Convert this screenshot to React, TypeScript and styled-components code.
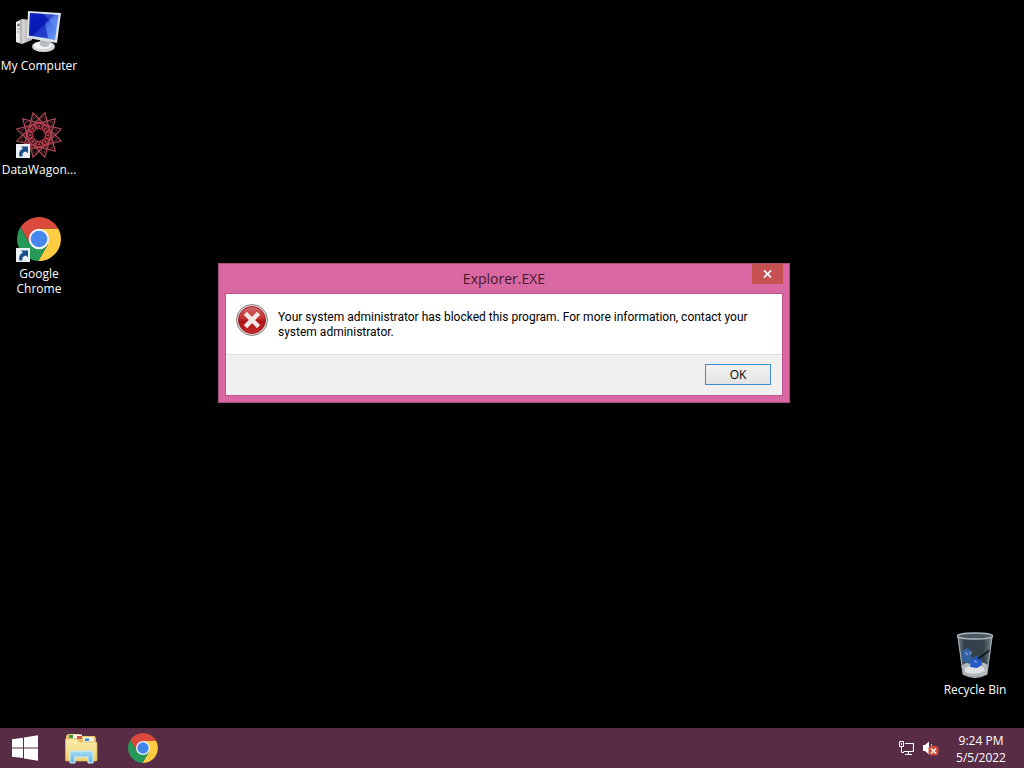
import React from 'react';
import styled, { createGlobalStyle } from 'styled-components';

const GlobalStyle = createGlobalStyle`
  * { box-sizing: border-box; }
  body {
    margin: 0;
    background: #000;
    font-family: "Open Sans", "Noto Sans", sans-serif;
    font-size: 12px;
    line-height: 15px;
  }
  button { font: inherit; }
`;

const Screen = styled.div`
  display: flex;
  flex-direction: column;
  min-height: 100vh;
`;

const Desktop = styled.main`
  position: relative;
  flex: 1;
  background: #000;
`;

const IconColumn = styled.div`
  display: flex;
  flex-direction: column;
  align-items: flex-start;
`;

const Shortcut = styled.button`
  display: flex;
  flex-direction: column;
  align-items: center;
  gap: 2px;
  width: 78px;
  height: 104px;
  padding: 8px 0 0;
  border: 0;
  background: none;
  color: #fff;
  white-space: nowrap;
`;

const BinSlot = styled.div`
  position: absolute;
  right: 10px;
  bottom: 0;
`;

const Dialog = styled.section`
  position: absolute;
  left: 218px;
  top: 263px;
  width: 572px;
  padding: 0 7px 7px;
  border: 1px solid #a9507f;
  background: #d968a2;
`;

const TitleBar = styled.header`
  position: relative;
  display: flex;
  justify-content: center;
  align-items: center;
  height: 30px;
`;

const Title = styled.h1`
  margin: 0;
  color: #43182f;
  font-size: 14px;
  line-height: 20px;
  font-weight: 400;
`;

const CloseButton = styled.button`
  position: absolute;
  right: -1px;
  top: 0;
  display: grid;
  place-items: center;
  width: 31px;
  height: 20px;
  padding: 0;
  border: 0;
  background: #c75050;
`;

const DialogPanel = styled.div`
  background: #fff;
  outline: 1px solid #bf5590;
`;

const Message = styled.div`
  display: flex;
  gap: 10px;
  padding: 10px 10px 14px;
`;

const MessageText = styled.p`
  flex: 1;
  margin: 6px 0 0;
  color: #000;
  font-family: Roboto, sans-serif;
`;

const Actions = styled.footer`
  display: flex;
  justify-content: flex-end;
  padding: 9px 11px 10px;
  border-top: 1px solid #dfdfdf;
  background: #f0f0f0;
`;

const OkButton = styled.button`
  width: 66px;
  height: 21px;
  padding: 0;
  border: 1px solid #3c8fd0;
  background: linear-gradient(#f1f1f1, #e4e4e4);
  color: #000;
`;

const Taskbar = styled.footer`
  display: flex;
  justify-content: space-between;
  height: 40px;
  background: #592c45;
`;

const Group = styled.div<{ $gap: number; $left?: number; $right?: number }>`
  display: flex;
  align-items: center;
  gap: ${(p) => p.$gap}px;
  padding-left: ${(p) => p.$left ?? 0}px;
  padding-right: ${(p) => p.$right ?? 0}px;
`;

const BarButton = styled.button`
  display: grid;
  place-items: center;
  padding: 0;
  border: 0;
  background: none;
`;

const Clock = styled.time`
  width: 54px;
  margin-left: 7px;
  padding-top: 2px;
  color: #fff;
  line-height: 17px;
  text-align: center;
`;

const ShortcutArrow = () => (
  <g>
    <rect x="1" y="32" width="14" height="14" fill="#e9f0f6" />
    <path d="M4.500 44.500c-1-4 .5-7 3.500-7.500L6 34.500h7v7l-2-2c-3 .5-4 2-3.500 5z" fill="#1d4f88" />
  </g>
);

const ComputerIcon = () => (
  <svg width="48" height="48" viewBox="0 0 48 48" aria-hidden="true">
    <defs>
      <linearGradient id="screen" x1="0" y1="0" x2="1" y2="1">
        <stop offset="0" stopColor="#1d36c8" />
        <stop offset="0.45" stopColor="#0a1bb8" />
        <stop offset="0.5" stopColor="#3f6ae8" />
        <stop offset="1" stopColor="#6fa0f4" />
      </linearGradient>
      <linearGradient id="tower" x1="0" y1="0" x2="1" y2="0">
        <stop offset="0" stopColor="#f2f2f2" />
        <stop offset="1" stopColor="#a9aaab" />
      </linearGradient>
    </defs>
    <g transform="translate(-1 0)">
      <path d="M2 14l6-3 10 1v20L8 36l-6-2z" fill="url(#tower)" />
      <path d="M7 12v23" stroke="#8d8f90" />
      <circle cx="4.500" cy="17" r="1.500" fill="#777" />
      <path d="M3 21h3M3 24h3" stroke="#aaa" />
      <ellipse cx="29.500" cy="38.500" rx="11.500" ry="5.500" fill="#d5d7d8" />
      <ellipse cx="29" cy="37.500" rx="9" ry="3.500" fill="#f2f3f3" />
      <path d="M26 30l10 2-1 6c-3 2-7 1-9-1z" fill="#b9bcbe" />
      <path d="M14 3l33 2-4 30-30-5z" fill="#dbe2e8" />
      <path d="M16 5l28.500 2-3.500 25-26-4.500z" fill="url(#screen)" />
      <path d="M16 5l13 1 5 24-19-2.500z" fill="#0717b4" opacity=".6" />
      <path d="M30 6l14.500 1-2 14z" fill="#8bb1fa" opacity=".3" />
    </g>
  </svg>
);

const turns = (n: number) => Array.from({ length: n }, (_, i) => (360 / n) * i);

const WagonIcon = () => (
  <svg width="48" height="48" viewBox="-24 -24 48 48" aria-hidden="true">
    <g fill="none" transform="translate(0 -1)">
      {turns(4).map((a) => (
        <path
          key={a}
          d="M0 -23L19.900 11.500L-19.900 11.500Z"
          transform={`rotate(${a + 15})`}
          stroke="#b8505c"
          strokeWidth="1.100"
        />
      ))}
      {turns(12).map((a) => (
        <path
          key={a}
          d="M-5 -12L0 -19L5 -12"
          transform={`rotate(${a + 15})`}
          stroke="#81343a"
          strokeWidth=".8"
        />
      ))}
      {turns(8).map((a) => (
        <g key={a} transform={`rotate(${a})`}>
          <circle cy="-9.500" r="3.200" stroke="#c23e50" strokeWidth="1.200" />
          <circle cy="-9" r="1.200" fill="#d04c60" />
          <path d="M-2 -5L3 -12M2 -5L-3 -12" stroke="#8c2c3a" strokeWidth=".9" />
        </g>
      ))}
    </g>
    <g transform="translate(-24 -24)">
      <ShortcutArrow />
    </g>
  </svg>
);

const ChromeIcon = ({ size, shortcut }: { size: number; shortcut?: boolean }) => (
  <svg width={size} height={size} viewBox={shortcut ? '-24 -24 48 48' : '-22 -22 44 44'} aria-hidden="true">
    <g transform={shortcut ? 'translate(0 -1)' : undefined}>
      <path d="M-18.620 -11.650A22 22 0 0 1 19.400 -10.300H0L-8.920 5.150Z" fill="#d94a3d" />
      <path d="M19.400 -10.300A22 22 0 0 1 -.780 21.950L8.920 5.150L0 -10.300Z" fill="#fdcc42" />
      <path d="M-.780 21.950A22 22 0 0 1 -18.620 -11.650L-8.920 5.150H8.920Z" fill="#249958" />
      <circle r="10.300" fill="#f4f4f4" />
      <circle r="8.300" fill="#4586ed" />
    </g>
    {shortcut && (
      <g transform="translate(-24 -24)">
        <ShortcutArrow />
      </g>
    )}
  </svg>
);

const RecycleBinIcon = () => (
  <svg width="48" height="48" viewBox="0 0 48 48" aria-hidden="true">
    <defs>
      <linearGradient id="glass" x1="0" y1="0" x2="1" y2="0">
        <stop offset="0" stopColor="#78848c" />
        <stop offset="0.2" stopColor="#34414b" />
        <stop offset="0.75" stopColor="#35424a" />
        <stop offset="1" stopColor="#808b92" />
      </linearGradient>
    </defs>
    <path d="M6.500 4h35L36.500 42Q24 49 11.500 42z" fill="url(#glass)" />
    <path d="M10.500 34Q17 28 24 31Q32 29 37 33L36 42Q24 48 12 42z" fill="#b3babd" />
    <path d="M14 36q8-5 18-1l2 4q-10 5-20 1z" fill="#dde1e2" />
    <path d="M11 19l5-3 5 3-1 5 3 4-4 4-6-2-3-4z" fill="#34609f" />
    <path d="M20 29l5-5 5 3 1 6-5 3-7-1z" fill="#2459ca" />
    <path d="M14 20l3 3M19 20l1 2M23 29l3 1" stroke="#7fa4dc" strokeWidth="1.500" />
    <path d="M39 18L27 27" stroke="#111b22" strokeWidth="2" />
    <path d="M7 5l5 36M41 5l-5 36" stroke="#a7b2b8" />
    <path d="M11.500 42Q24 49 36.500 42" fill="none" stroke="#b8c1c5" />
    <ellipse cx="24" cy="4" rx="17.500" ry="3" fill="#4a5963" stroke="#a9b5bb" strokeWidth="1.500" />
  </svg>
);

const ErrorIcon = () => (
  <svg width="32" height="32" viewBox="0 0 32 32" aria-hidden="true">
    <defs>
      <linearGradient id="red" x1="0" y1="0" x2="0" y2="1">
        <stop offset="0" stopColor="#d36b6b" />
        <stop offset="0.45" stopColor="#c32c2f" />
        <stop offset="0.55" stopColor="#ad1015" />
        <stop offset="1" stopColor="#c92c2f" />
      </linearGradient>
    </defs>
    <circle cx="16" cy="16" r="15.500" fill="#e6dfdf" stroke="#8f7d7d" />
    <circle cx="16" cy="16" r="13.500" fill="url(#red)" stroke="#952327" />
    <path d="M11 11L21 21M21 11L11 21" stroke="#f2e9e6" strokeWidth="4.500" strokeLinecap="square" />
  </svg>
);

const WindowsIcon = () => (
  <svg width="26" height="26" viewBox="0 0 26 26" fill="#fff" aria-hidden="true">
    <path d="M0 4.200L11 2.700V12.400H0zM12 2.500L26 .3V12.400H12zM0 13.500H11V23L0 21.700zM12 13.500H26V25.700L12 23.400z" />
  </svg>
);

const ExplorerIcon = () => (
  <svg width="36" height="32" viewBox="1 0 36 32" aria-hidden="true">
    <defs>
      <linearGradient id="folder" x1="0" y1="0" x2="0" y2="1">
        <stop offset="0" stopColor="#fbeeb0" />
        <stop offset="1" stopColor="#ecd06c" />
      </linearGradient>
      <linearGradient id="stand" x1="0" y1="0" x2="0" y2="1">
        <stop offset="0" stopColor="#a6dcf2" />
        <stop offset="1" stopColor="#5fb2e2" />
      </linearGradient>
    </defs>
    <path d="M2 4l2-2h11l2 2h14l1 3v5H2z" fill="#e6c366" />
    <path d="M8 2.500h10v4H8z" fill="#f8f6e8" />
    <path d="M19 5h11v5H19z" fill="#f6f1df" />
    <path d="M5 3h4v3H5z" fill="#3b9b4a" />
    <path d="M13 4h5v3h-5z" fill="#cf5647" />
    <path d="M21 6.500h4v2.500h-4z" fill="#3d8ad0" />
    <path d="M1.500 7h11l3 3h16.500q1 0 1 1v17q0 1-1 1H2.500q-1 0-1-1z" fill="url(#folder)" stroke="#d8b659" strokeWidth=".7" />
    <path d="M6 31V21q0-2 2-2h19q2 0 2 2v10h-5v-6H11v6z" fill="url(#stand)" stroke="#d9f1fa" />
  </svg>
);

const NetworkIcon = () => (
  <svg width="16" height="16" viewBox="0 0 16 16" fill="none" stroke="#fff" aria-hidden="true">
    <path d="M7 3.500H15.500V11.500H5.500M10.500 12V14M7 14.500H14" strokeWidth="1.200" />
    <path d="M1.500 1.500H5.500V6.500H1.500zM3.500 7V12.500H6" />
    <path d="M3.500 3v2" />
  </svg>
);

const MutedIcon = () => (
  <svg width="17" height="16" viewBox="0 0 17 16" aria-hidden="true">
    <path d="M1 5H3L7 1.500V14.500L3 11H1z" fill="#fff" />
    <path d="M9 4q1.500 2 1 4" stroke="#ddd" fill="none" />
    <rect x="6.500" y="6" width="10" height="9.500" rx="3" fill="#c94c3b" />
    <path d="M9 8.500l5 5M14 8.500l-5 5" stroke="#fbe9e4" strokeWidth="1.700" />
  </svg>
);

export default function App() {
  return (
    <Screen>
      <GlobalStyle />
      <Desktop>
        <IconColumn>
          <Shortcut>
            <ComputerIcon />
            <span>My Computer</span>
          </Shortcut>
          <Shortcut>
            <WagonIcon />
            <span>DataWagon...</span>
          </Shortcut>
          <Shortcut>
            <ChromeIcon size={48} shortcut />
            <span>
              Google
              <br />
              Chrome
            </span>
          </Shortcut>
        </IconColumn>
        <BinSlot>
          <Shortcut>
            <RecycleBinIcon />
            <span>Recycle Bin</span>
          </Shortcut>
        </BinSlot>
        <Dialog role="alertdialog" aria-labelledby="dialog-title" aria-describedby="dialog-text">
          <TitleBar>
            <Title id="dialog-title">Explorer.EXE</Title>
            <CloseButton aria-label="Close">
              <svg width="9" height="8" viewBox="0 0 9 8" aria-hidden="true">
                <path d="M1 .5L8 7.500M8 .5L1 7.500" stroke="#fff" strokeWidth="1.700" />
              </svg>
            </CloseButton>
          </TitleBar>
          <DialogPanel>
            <Message>
              <ErrorIcon />
              <MessageText id="dialog-text">
                Your system administrator has blocked this program. For more information, contact your
                <br />
                system administrator.
              </MessageText>
            </Message>
            <Actions>
              <OkButton>OK</OkButton>
            </Actions>
          </DialogPanel>
        </Dialog>
      </Desktop>
      <Taskbar>
        <Group $gap={27} $left={12}>
          <BarButton aria-label="Start">
            <WindowsIcon />
          </BarButton>
          <BarButton aria-label="File Explorer">
            <ExplorerIcon />
          </BarButton>
          <BarButton aria-label="Google Chrome">
            <ChromeIcon size={30} />
          </BarButton>
        </Group>
        <Group $gap={8} $right={16}>
          <BarButton aria-label="Network">
            <NetworkIcon />
          </BarButton>
          <BarButton aria-label="Volume muted">
            <MutedIcon />
          </BarButton>
          <Clock>
            9:24 PM
            <br />
            5/5/2022
          </Clock>
        </Group>
      </Taskbar>
    </Screen>
  );
}
